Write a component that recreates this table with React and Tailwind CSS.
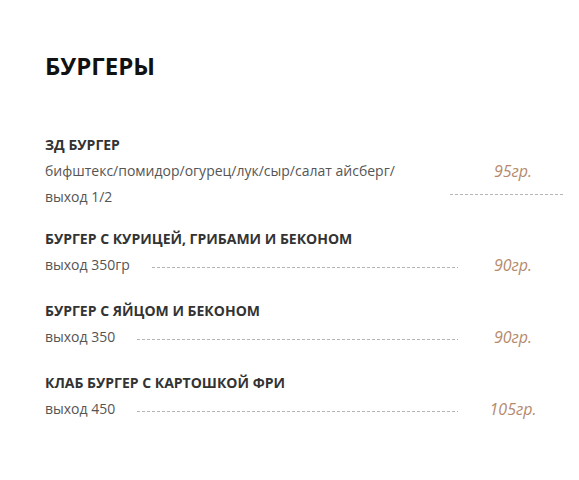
import React from "react";

// позиции меню
const ITEMS = [
  { name: "БУРГЕР С КУРИЦЕЙ, ГРИБАМИ И БЕКОНОМ", out: "выход 350гр", price: "90гр.", gap: "mt-[16px]" },
  { name: "БУРГЕР С ЯЙЦОМ И БЕКОНОМ", out: "выход 350", price: "90гр.", gap: "mt-[20px]" },
  { name: "КЛАБ БУРГЕР С КАРТОШКОЙ ФРИ", out: "выход 450", price: "105гр.", gap: "mt-[20px]" },
];

const dots = "h-px bg-[repeating-linear-gradient(to_right,#b5b5b5_0_3px,transparent_3px_5px)]";

function Price({ children }) {
  return <span className="italic text-[16px] leading-[26px] text-[#b58a6c]">{children}</span>;
}

function MenuRow({ item }) {
  return (
    <div className={item.gap}>
      <div className="font-bold text-[14px] leading-[26px] text-[#333]">{item.name}</div>
      <div className="flex items-center">
        <span className="text-[14px] leading-[26px] text-[#555]">{item.out}</span>
        <div className={`flex-1 ml-[22px] mt-[4px] ${dots}`} />
        <div className="w-[110px] text-center">
          <Price>{item.price}</Price>
        </div>
      </div>
    </div>
  );
}

export default function App() {
  return (
    <div className="w-[579px] h-[480px] bg-white pl-[45px] pr-[11px] pt-[50px] font-['Open_Sans',sans-serif]">
      <h1 className="font-bold text-[24px] leading-[32px] text-[#111]">БУРГЕРЫ</h1>

      <div className="mt-[50px]">
        <div className="font-bold text-[14px] leading-[26px] text-[#333]">ЗД БУРГЕР</div>
        <div className="flex">
          <div className="flex-1 text-[14px] leading-[26px] text-[#555]">
            <div>бифштекс/помидор/огурец/лук/сыр/салат айсберг/</div>
            <div>выход 1/2</div>
          </div>
          <div className="w-[118px]">
            <div className="pl-[8px] text-center">
              <Price>95гр.</Price>
            </div>
            <div className={`w-[115px] mt-[10px] ${dots}`} />
          </div>
        </div>
      </div>

      {ITEMS.map((it) => (
        <MenuRow key={it.name} item={it} />
      ))}
    </div>
  );
}
